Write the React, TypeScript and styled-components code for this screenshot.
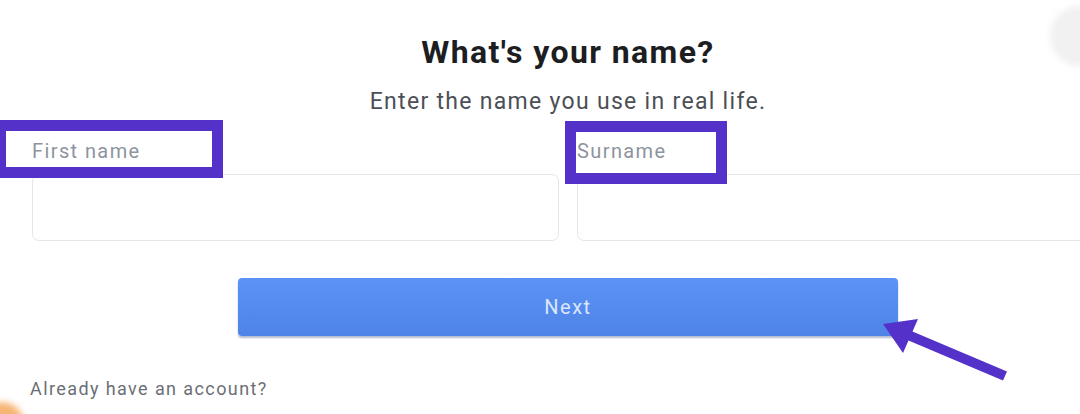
import styled, { createGlobalStyle } from "styled-components";

const GlobalStyle = createGlobalStyle`
  html, body {
    margin: 0;
    padding: 0;
    background: #ffffff;
    overflow: hidden;
  }
  body {
    font-family: Roboto, "Liberation Sans", Arial, sans-serif;
  }
`;

const Page = styled.div`
  position: relative;
  width: 1080px;
  height: 414px;
  overflow: hidden;
  background: #ffffff;
`;

const Form = styled.div`
  width: 1072px;
  margin-left: 32px;
  padding-top: 33px;
  display: flex;
  flex-direction: column;
`;

const Title = styled.h1`
  margin: 0;
  text-align: center;
  font-size: 32px;
  line-height: 38px;
  font-weight: 700;
  letter-spacing: 1.4px;
  color: #1c1e21;
`;

const Subtitle = styled.p`
  margin: 17px 0 0;
  text-align: center;
  font-size: 23px;
  line-height: 28px;
  letter-spacing: 1.3px;
  color: #4b4f56;
`;

const Fields = styled.div`
  margin-top: 23px;
  display: grid;
  grid-template-columns: 1fr 1fr;
  gap: 18px;
`;

const Field = styled.div`
  position: relative;
  display: flex;
  flex-direction: column;
  gap: 11px;
`;

const Label = styled.label`
  font-size: 20px;
  line-height: 24px;
  letter-spacing: 1.4px;
  color: #8d949e;
`;

/* purple annotation drawn over the label */
const Highlight = styled.span<{ $left: number; $top: number; $width: number; $height: number }>`
  position: absolute;
  left: ${(p) => p.$left}px;
  top: ${(p) => p.$top}px;
  width: ${(p) => p.$width}px;
  height: ${(p) => p.$height}px;
  border: 11px solid #5431c9;
  box-sizing: border-box;
  pointer-events: none;
`;

const Input = styled.input`
  box-sizing: border-box;
  height: 67px;
  border: 1.5px solid #e4e6e9;
  border-radius: 7px;
  background: #fff;
  outline: none;
`;

const NextButton = styled.button`
  align-self: flex-start;
  margin: 37px 0 0 206px;
  width: 660px;
  height: 58px;
  border: none;
  border-radius: 4px;
  background: linear-gradient(#5c92f6, #4f83e6);
  box-shadow: 0 2px 2px rgba(40, 60, 120, 0.35);
  color: #dbe7fd;
  font-family: Roboto, "Liberation Sans", Arial, sans-serif;
  font-size: 20px;
  letter-spacing: 1.5px;
  cursor: pointer;
`;

const LoginLink = styled.p`
  margin: 42px 0 0 -2px;
  font-size: 18px;
  line-height: 22px;
  letter-spacing: 1.4px;
  color: #6b6f75;
`;

const Arrow = styled.svg`
  position: absolute;
  left: 870px;
  top: 311px;
  width: 150px;
  height: 80px;
`;

const CornerBlob = styled.div<{ $color: string }>`
  position: absolute;
  border-radius: 50%;
  background: ${(p) => p.$color};
  filter: blur(3px);
`;

const TopBlob = styled(CornerBlob)`
  right: -30px;
  top: 6px;
  width: 60px;
  height: 60px;
`;

const BottomBlob = styled(CornerBlob)`
  left: -20px;
  bottom: -32px;
  width: 44px;
  height: 44px;
`;

export default function App() {
  return (
    <Page>
      <GlobalStyle />
      <TopBlob $color="#f1f1f1" />
      <BottomBlob $color="#f6b574" />
      <Form>
        <Title>What's your name?</Title>
        <Subtitle>Enter the name you use in real life.</Subtitle>
        <Fields>
          <Field>
            <Label>First name</Label>
            <Input />
            <Highlight $left={-37} $top={-19} $width={228} $height={58} />
          </Field>
          <Field>
            <Label>Surname</Label>
            <Input />
            <Highlight $left={-12} $top={-18} $width={162} $height={63} />
          </Field>
        </Fields>
        <NextButton>Next</NextButton>
        <LoginLink>Already have an account?</LoginLink>
      </Form>
      <Arrow viewBox="0 0 150 80">
        <polygon
          points="13,13 48,8 42.5,20.4 137,60.4 133,69.6 38.5,29.6 33,42"
          fill="#5431c9"
        />
      </Arrow>
    </Page>
  );
}
